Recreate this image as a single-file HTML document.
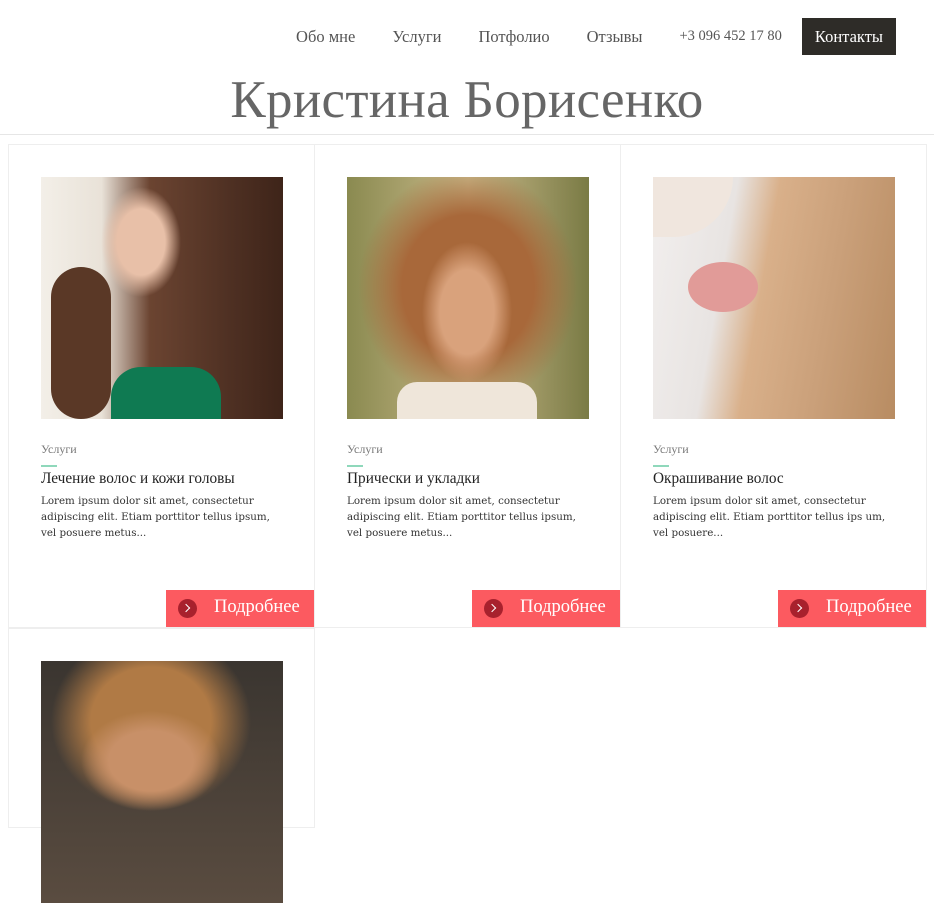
<!DOCTYPE html>
<html><head><meta charset="utf-8"><style>
*{margin:0;padding:0;box-sizing:border-box}
body{width:934px;height:768px;overflow:hidden;background:#fff;font-family:"Liberation Serif",serif;color:#333;position:relative}
.nav{position:absolute;top:18px;right:38px;display:flex;align-items:center;height:37px;font-size:16.5px;color:#555}
.nav span{margin-right:37px}
.nav .ph{font-size:14.5px;margin-right:20px}
.nav .ct{background:#2e2c28;color:#fff;padding:0 13px;height:37px;line-height:37px;margin:0}
h1{position:absolute;top:70px;left:0;width:934px;text-align:center;font-weight:normal;font-size:53px;color:#666;letter-spacing:0.3px}
.hr{position:absolute;top:134px;left:0;width:934px;height:1px;background:#e6e6e6}
.card{position:absolute;width:307px;height:484px;border:1px solid #eeeeee}
.img{position:absolute;left:32px;top:32px;width:242px;height:242px}
.cat{position:absolute;left:32px;top:297px;font-size:12px;color:#777}
.line{position:absolute;left:32px;top:320px;width:16px;height:2px;background:#8fd8bb}
.ttl{position:absolute;left:32px;top:325px;font-size:15.3px;color:#222}
.txt{position:absolute;left:32px;top:348px;width:245px;font-family:"DejaVu Serif",serif;font-size:10.3px;line-height:16px;color:#333}
.btn{position:absolute;right:0;bottom:0;width:148px;height:37px;background:#fc5a60;color:#fff;font-size:18.5px;line-height:35px;padding-left:48px}
.btn i{position:absolute;left:12px;top:9px;width:19px;height:19px;border-radius:50%;background:#a8212d}
.btn i:after{content:"";position:absolute;left:5px;top:6px;width:5px;height:5px;border-top:1.5px solid #fff;border-right:1.5px solid #fff;transform:rotate(45deg)}
</style></head><body>
<div class="nav"><span>Обо мне</span><span>Услуги</span><span>Потфолио</span><span>Отзывы</span><span class="ph">+3 096 452 17 80</span><span class="ct">Контакты</span></div>
<h1>Кристина Борисенко</h1>
<div class="hr"></div>

<div class="card" style="left:8px;top:144px">
<div class="img" style="background:radial-gradient(ellipse 40px 55px at 100px 65px,#e8c0a8 60%,transparent 100%),linear-gradient(90deg,#f3efe8 0%,#e9e2d8 25%,#6b4431 45%,#4d2f22 80%,#3e2419 100%);"><div style="position:absolute;left:70px;top:190px;width:110px;height:52px;background:#0f7a52;border-radius:30px 30px 0 0"></div><div style="position:absolute;left:10px;top:90px;width:60px;height:152px;background:#5a3826;border-radius:30px"></div></div>
<div class="cat">Услуги</div><div class="line"></div>
<div class="ttl">Лечение волос и кожи головы</div>
<div class="txt">Lorem ipsum dolor sit amet, consectetur adipiscing elit. Etiam porttitor tellus ipsum, vel posuere metus...</div>
<div class="btn"><i></i>Подробнее</div></div>

<div class="card" style="left:314px;top:144px">
<div class="img" style="background:radial-gradient(ellipse 45px 70px at 120px 135px,#d9a27c 60%,transparent 100%),radial-gradient(ellipse 110px 120px at 121px 110px,#a8683a 60%,transparent 100%),linear-gradient(90deg,#8a8a50,#c9b98a 50%,#7a7b45);"><div style="position:absolute;left:50px;top:205px;width:140px;height:37px;background:#efe6da;border-radius:20px 20px 0 0"></div></div>
<div class="cat">Услуги</div><div class="line"></div>
<div class="ttl">Прически и укладки</div>
<div class="txt">Lorem ipsum dolor sit amet, consectetur adipiscing elit. Etiam porttitor tellus ipsum, vel posuere metus...</div>
<div class="btn"><i></i>Подробнее</div></div>

<div class="card" style="left:620px;top:144px">
<div class="img" style="background:linear-gradient(100deg,#f2efee 0%,#e8e4e2 30%,#d9b08a 45%,#caa07a 70%,#b88c62 100%);"><div style="position:absolute;left:35px;top:85px;width:70px;height:50px;background:#e19b98;border-radius:50%"></div><div style="position:absolute;left:0;top:0;width:80px;height:60px;background:#f0e6de;border-radius:0 0 60px 0"></div></div>
<div class="cat">Услуги</div><div class="line"></div>
<div class="ttl">Окрашивание волос</div>
<div class="txt">Lorem ipsum dolor sit amet, consectetur adipiscing elit. Etiam porttitor tellus ips um, vel posuere...</div>
<div class="btn"><i></i>Подробнее</div></div>

<div class="card" style="left:8px;top:628px;height:200px">
<div class="img" style="background:radial-gradient(ellipse 70px 50px at 110px 100px,#c89068 60%,transparent 100%),radial-gradient(ellipse 100px 90px at 110px 60px,#b07a45 60%,transparent 100%),linear-gradient(#3a3530,#5a4c40);"></div></div>
</body></html>
